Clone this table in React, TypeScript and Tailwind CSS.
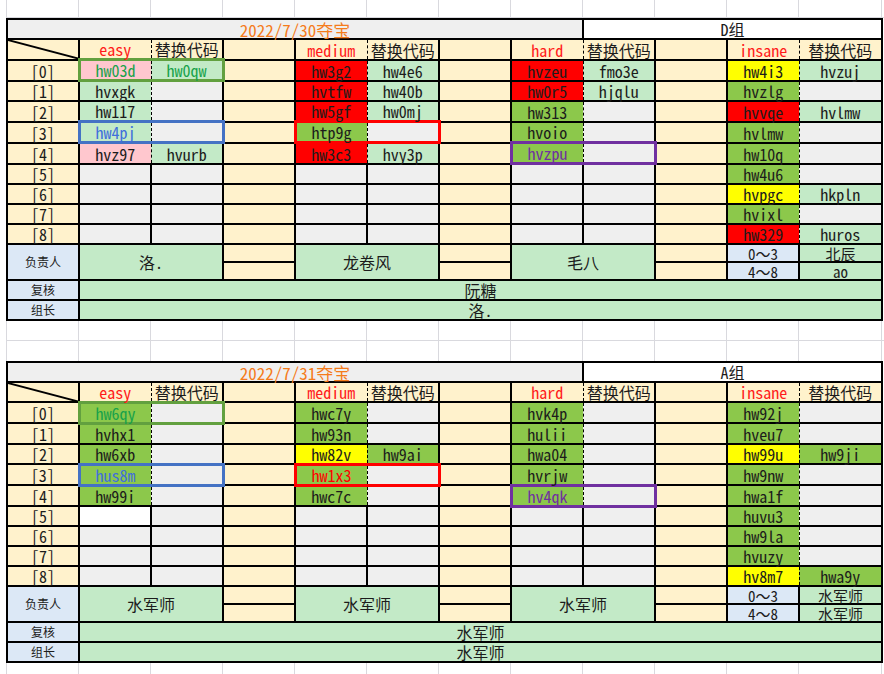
type Cell = [string, string, string?];

const BG: Record<string, string> = {
  lg: 'bg-[#c3eac7]',
  g: 'bg-[#8cc84b]',
  r: 'bg-[#ff0000]',
  y: 'bg-[#ffff00]',
  p: 'bg-[#ffc7ce]',
  e: 'bg-[#efefef]',
  w: 'bg-white',
  yl: 'bg-[#fff2cc]',
  b: 'bg-[#dce8f6]',
};

const FG: Record<string, string> = {
  k: 'text-[#1c1c1c]',
  gr: 'text-[#18a24a]',
  bl: 'text-[#3f6fdc]',
  pu: 'text-[#7030a0]',
  rd: 'text-[#ff0000]',
};

// highlight frames around a code + replacement pair
const BOX_L: Record<string, string> = {
  green: 'border-t-[3px] border-b-[3px] border-l-[3px] border-t-[#62a03f] border-b-[#62a03f] border-l-[#62a03f]',
  blue: 'border-t-[3px] border-b-[3px] border-l-[3px] border-t-[#4472c4] border-b-[#4472c4] border-l-[#4472c4]',
  red: 'border-t-[3px] border-b-[3px] border-l-[3px] border-t-[#ff0000] border-b-[#ff0000] border-l-[#ff0000]',
  purple: 'border-t-[3px] border-b-[3px] border-l-[3px] border-t-[#7030a0] border-b-[#7030a0] border-l-[#7030a0]',
};
const BOX_R: Record<string, string> = {
  green: 'border-t-[3px] border-b-[3px] border-r-[3px] border-t-[#62a03f] border-b-[#62a03f] border-r-[#62a03f]',
  blue: 'border-t-[3px] border-b-[3px] border-r-[3px] border-t-[#4472c4] border-b-[#4472c4] border-r-[#4472c4]',
  red: 'border-t-[3px] border-b-[3px] border-r-[3px] border-t-[#ff0000] border-b-[#ff0000] border-r-[#ff0000]',
  purple: 'border-t-[3px] border-b-[3px] border-r-[3px] border-t-[#7030a0] border-b-[#7030a0] border-r-[#7030a0]',
};
const BOXES: Record<string, string> = { '0-0': 'green', '3-0': 'blue', '3-1': 'red', '4-2': 'purple' };

const DASH_R = 'border-r-[1px] [border-right-style:dashed]';
const DASH_L = 'border-l-[1px] [border-left-style:dashed]';
const BASE = 'border-2 border-black p-0 text-center whitespace-nowrap';

const E: Cell = ['', 'e'];

const day30: Cell[][] = [
  [['hw03d', 'p', 'gr'], ['hw0qw', 'lg', 'gr'], ['hw3g2', 'r'], ['hw4e6', 'lg'], ['hvzeu', 'r'], ['fmo3e', 'lg'], ['hw4i3', 'y'], ['hvzuj', 'lg']],
  [['hvxgk', 'lg'], E, ['hvtfw', 'r'], ['hw40b', 'lg'], ['hw0r5', 'r'], ['hjqlu', 'lg'], ['hvzlg', 'g'], E],
  [['hw117', 'lg'], E, ['hw5gf', 'r'], ['hw0mj', 'lg'], ['hw313', 'g'], E, ['hvvqe', 'r'], ['hvlmw', 'lg']],
  [['hw4pj', 'lg', 'bl'], E, ['htp9g', 'g'], E, ['hvoio', 'g'], E, ['hvlmw', 'g'], E],
  [['hvz97', 'p'], ['hvurb', 'lg'], ['hw3c3', 'r'], ['hvy3p', 'lg'], ['hvzpu', 'g', 'pu'], E, ['hw10q', 'g'], E],
  [E, E, E, E, E, E, ['hw4u6', 'g'], E],
  [E, E, E, E, E, E, ['hvpgc', 'y'], ['hkpln', 'lg']],
  [E, E, E, E, E, E, ['hvixl', 'g'], E],
  [E, E, E, E, E, E, ['hw329', 'r'], ['huros', 'lg']],
];

const day31: Cell[][] = [
  [['hw6qy', 'g', 'gr'], E, ['hwc7y', 'g'], E, ['hvk4p', 'g'], E, ['hw92j', 'g'], E],
  [['hvhx1', 'g'], E, ['hw93n', 'g'], E, ['hulii', 'g'], E, ['hveu7', 'g'], E],
  [['hw6xb', 'g'], E, ['hw82v', 'y'], ['hw9ai', 'g'], ['hwa04', 'g'], E, ['hw99u', 'y'], ['hw9ji', 'g']],
  [['hus8m', 'g', 'bl'], E, ['hw1x3', 'g', 'rd'], E, ['hvrjw', 'g'], E, ['hw9nw', 'g'], E],
  [['hw99i', 'g'], E, ['hwc7c', 'g'], E, ['hv4qk', 'g', 'pu'], E, ['hwa1f', 'g'], E],
  [['', 'w'], E, E, E, E, E, ['huvu3', 'g'], E],
  [E, E, E, E, E, E, ['hw9la', 'g'], E],
  [E, E, E, E, E, E, ['hvuzy', 'g'], E],
  [E, E, E, E, E, E, ['hv8m7', 'y'], ['hwa9y', 'g']],
];

const COLS = [
  'w-[72px]', 'w-[72px]', 'w-[72px]', 'w-[72px]', 'w-[72px]', 'w-[72px]',
  'w-[72px]', 'w-[72px]', 'w-[72px]', 'w-[72px]', 'w-[72px]', 'w-[83px]',
];

const LEVELS = ['easy', 'medium', 'hard', 'insane'];

function GapRow({ h, line }: { h: string; line?: boolean }) {
  const b = line ? 'border-b border-b-[#d9d9de]' : '';
  return (
    <div className={`flex ${h}`}>
      <div className="w-[6px] shrink-0" />
      {COLS.map((w, i) => (
        <div key={i} className={`${w} shrink-0 border-l border-l-[#d9d9de] ${b}`} />
      ))}
      <div className={`flex-1 border-l border-l-[#d9d9de] ${b}`} />
    </div>
  );
}

type SheetProps = {
  title: string;
  group: string;
  rows: Cell[][];
  leads: string[];
  subs: string[];
  review: string;
  captain: string;
};

function Sheet({ title, group, rows, leads, subs, review, captain }: SheetProps) {
  const yl = `${BASE} ${BG.yl}`;
  return (
    <table className="ml-[6px] border-collapse text-[16px] leading-[18px] text-[#1c1c1c]">
      <colgroup>
        {COLS.map((w, i) => (
          <col key={i} className={w} />
        ))}
      </colgroup>
      <tbody>
        <tr className="h-[20px]">
          <td colSpan={8} className={`${BASE} align-bottom bg-[#efefef] text-[17px] leading-[17px] text-[#f57c1c]`}>
            {title}
          </td>
          <td colSpan={4} className={`${BASE} align-bottom bg-white`}>
            {group}
          </td>
        </tr>
        <tr className="h-[20px]">
          <td className={`${BASE} relative ${BG.yl}`}>
            <svg className="absolute inset-0 w-full h-full" viewBox="0 0 72 20" preserveAspectRatio="none">
              <line x1="0" y1="0" x2="72" y2="20" stroke="#000" strokeWidth="2" />
            </svg>
          </td>
          {LEVELS.map((lv, p) => (
            <HeaderPair key={lv} label={lv} last={p === 3} />
          ))}
        </tr>
        {rows.map((row, r) => (
          <tr key={r} className="h-[20px]">
            <td className={`${BASE} align-bottom ${BG.yl}`}>[{r}]</td>
            {[0, 1, 2, 3].map((p) => {
              const a = row[p * 2];
              const b = row[p * 2 + 1];
              const dashed = r <= 4 || p === 3;
              const box = BOXES[`${r}-${p}`];
              return [
                <td
                  key={`a${p}`}
                  className={`${BASE} align-bottom ${BG[a[1]]} ${FG[a[2] ?? 'k']} ${box ? BOX_L[box] : ''} ${dashed ? DASH_R : ''}`}
                >
                  {a[0]}
                </td>,
                <td
                  key={`b${p}`}
                  className={`${BASE} align-bottom ${BG[b[1]]} ${FG[b[2] ?? 'k']} ${box ? BOX_R[box] : ''} ${dashed ? DASH_L : ''}`}
                >
                  {b[0]}
                </td>,
                p < 3 ? <td key={`f${p}`} className={yl} /> : null,
              ];
            })}
          </tr>
        ))}
        <tr className="h-[18px]">
          <td rowSpan={2} className={`${BASE} align-middle ${BG.b} text-[12px]`}>
            负责人
          </td>
          <td colSpan={2} rowSpan={2} className={`${BASE} align-middle ${BG.lg}`}>
            {leads[0]}
          </td>
          <td className={yl} />
          <td colSpan={2} rowSpan={2} className={`${BASE} align-middle ${BG.lg}`}>
            {leads[1]}
          </td>
          <td className={yl} />
          <td colSpan={2} rowSpan={2} className={`${BASE} align-middle ${BG.lg}`}>
            {leads[2]}
          </td>
          <td className={yl} />
          <td className={`${BASE} align-bottom text-[15px] leading-[15px] ${BG.b}`}>0～3</td>
          <td className={`${BASE} align-bottom text-[15px] leading-[15px] ${BG.lg}`}>{subs[0]}</td>
        </tr>
        <tr className="h-[18px]">
          <td className={yl} />
          <td className={yl} />
          <td className={yl} />
          <td className={`${BASE} align-bottom text-[15px] leading-[15px] ${BG.b}`}>4～8</td>
          <td className={`${BASE} align-bottom text-[15px] leading-[15px] ${BG.lg}`}>{subs[1]}</td>
        </tr>
        <tr className="h-[20px]">
          <td className={`${BASE} align-bottom ${BG.b} text-[12px]`}>复核</td>
          <td colSpan={11} className={`${BASE} align-bottom ${BG.lg}`}>
            {review}
          </td>
        </tr>
        <tr className="h-[19px]">
          <td className={`${BASE} align-bottom ${BG.b} text-[12px]`}>组长</td>
          <td colSpan={11} className={`${BASE} align-bottom ${BG.lg}`}>
            {captain}
          </td>
        </tr>
      </tbody>
    </table>
  );
}

function HeaderPair({ label, last }: { label: string; last: boolean }) {
  return (
    <>
      <td className={`${BASE} align-bottom ${BG.yl} text-[#ff1a1a] ${DASH_R}`}>{label}</td>
      <td className={`${BASE} align-bottom ${BG.yl} ${DASH_L}`}>替换代码</td>
      {!last && <td className={`${BASE} ${BG.yl}`} />}
    </>
  );
}

export default function App() {
  return (
    <div className="w-[884px] h-[674px] overflow-hidden bg-white [font-family:'Noto_Sans_Mono_CJK_SC','Noto_Sans_CJK_SC',monospace]">
      <GapRow h="h-[18px]" line />
      <Sheet
        title="2022/7/30夺宝"
        group="D组"
        rows={day30}
        leads={['洛.', '龙卷风', '毛八']}
        subs={['北辰', 'ao']}
        review="阮糖"
        captain="洛."
      />
      <GapRow h="h-[20px]" line />
      <GapRow h="h-[20px]" />
      <Sheet
        title="2022/7/31夺宝"
        group="A组"
        rows={day31}
        leads={['水军师', '水军师', '水军师']}
        subs={['水军师', '水军师']}
        review="水军师"
        captain="水军师"
      />
      <GapRow h="h-[20px]" />
    </div>
  );
}
